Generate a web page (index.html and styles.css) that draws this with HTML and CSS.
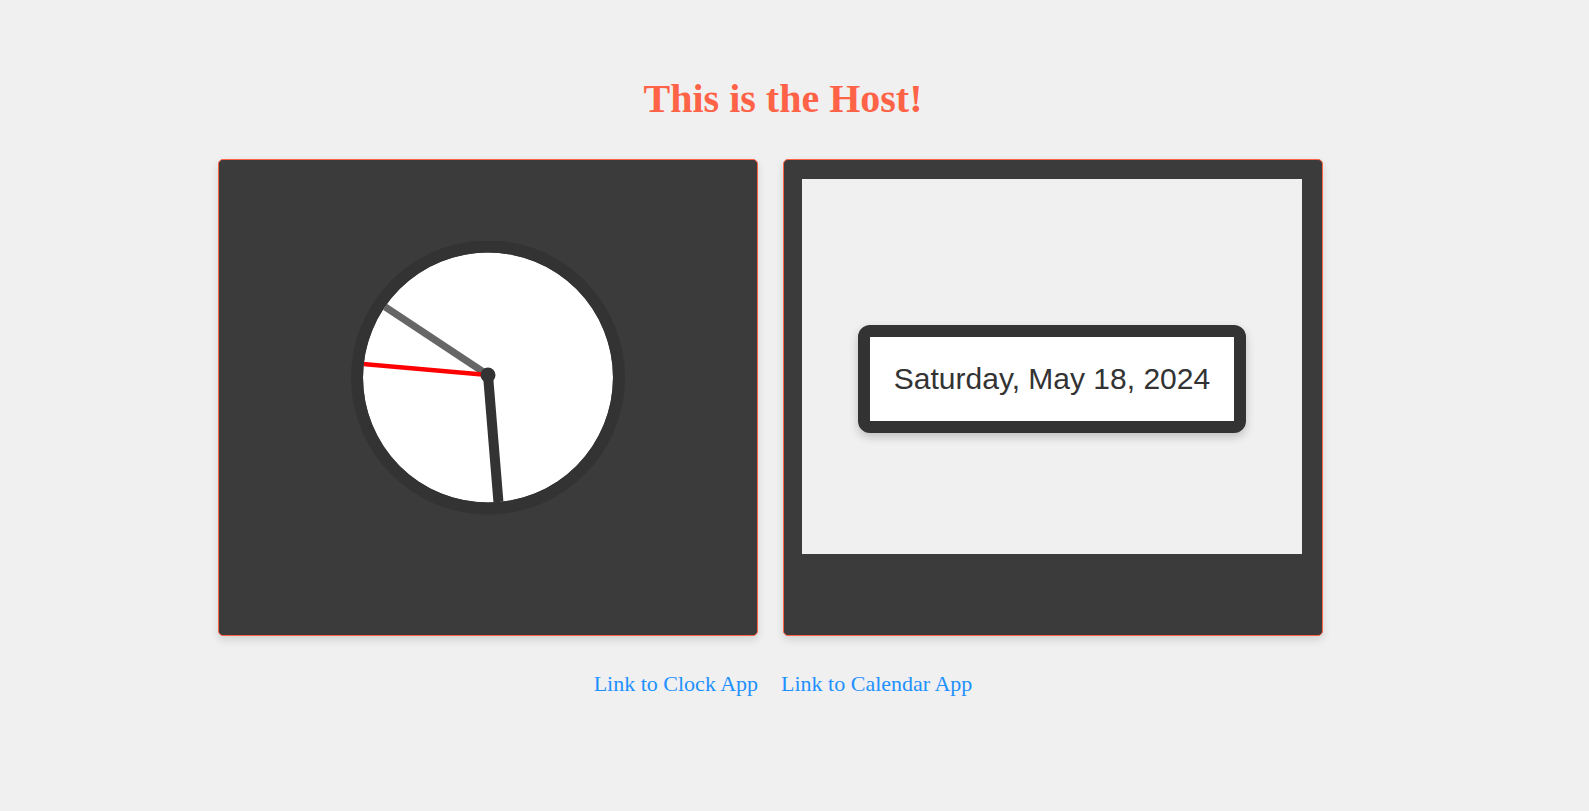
FILE: index.html
```html
<!DOCTYPE html>
<html lang="en">
<head>
<meta charset="utf-8">
<title>Host</title>
<link rel="stylesheet" href="styles.css">
</head>
<body>
<div class="page">
  <h1 class="title">This is the Host!</h1>
  <div class="cards">
    <section class="card card-clock">
      <svg class="clock" width="274" height="274" viewBox="0 0 274 274" aria-label="Clock">
        <defs>
          <clipPath id="face">
            <circle cx="137" cy="136.5" r="125"/>
          </clipPath>
        </defs>
        <circle cx="137" cy="136.5" r="125" fill="#ffffff"/>
        <g clip-path="url(#face)">
          <line x1="137" y1="134" x2="137" y2="-10" stroke="#333333" stroke-width="10" transform="rotate(175.3 137 134)"/>
          <line x1="137" y1="134" x2="137" y2="-10" stroke="#666666" stroke-width="7" transform="rotate(303.5 137 134)"/>
          <line x1="137" y1="134" x2="137" y2="-10" stroke="#ff0000" stroke-width="4.5" transform="rotate(275 137 134)"/>
        </g>
        <circle cx="137" cy="136.5" r="131" fill="none" stroke="#333333" stroke-width="12"/>
        <circle cx="137" cy="134" r="7.5" fill="#333333"/>
      </svg>
    </section>
    <section class="card card-calendar">
      <div class="frame">
        <div class="date-box">
          <div class="date-text">Saturday, May 18, 2024</div>
        </div>
      </div>
    </section>
  </div>
  <nav class="links">
    <a class="link" href="#clock">Link to Clock App</a>
    <a class="link" href="#calendar">Link to Calendar App</a>
  </nav>
</div>
</body>
</html>
```
FILE: styles.css
```css
html, body {
  margin: 0;
  padding: 0;
  background: #f0f0f0;
}

.page {
  width: 1566px;
  padding-top: 76px;
  font-family: "Liberation Serif", "Times New Roman", serif;
}

.title {
  margin: 0 0 37px;
  text-align: center;
  font-family: "Liberation Serif", "Times New Roman", serif;
  font-weight: 700;
  font-size: 40px;
  line-height: 46px;
  color: #ff6347;
}

.cards {
  display: flex;
  justify-content: center;
  gap: 25px;
  padding-right: 25px;
}

.card {
  box-sizing: border-box;
  width: 540px;
  height: 477px;
  border: 1px solid #ff6347;
  border-radius: 5px;
  background: #3b3b3b;
  box-shadow: 0 4px 8px rgba(0, 0, 0, 0.12);
}

.card-clock {
  display: flex;
  justify-content: center;
  align-items: flex-start;
  padding-top: 81px;
}

.clock {
  display: block;
}

.card-calendar {
  padding: 19px 20px 0 18px;
}

.frame {
  width: 500px;
  height: 375px;
  background: #f0f0f0;
  display: flex;
  justify-content: center;
  align-items: flex-start;
  padding-top: 146px;
  box-sizing: border-box;
}

.date-box {
  border: 12px solid #333333;
  border-radius: 12px;
  background: #ffffff;
  box-shadow: 0 4px 10px rgba(0, 0, 0, 0.2);
}

.date-text {
  padding: 24px;
  font-family: "Liberation Sans", Arial, sans-serif;
  font-size: 30px;
  line-height: 36px;
  color: #333333;
  white-space: nowrap;
}

.links {
  display: flex;
  justify-content: center;
  gap: 23px;
  margin-top: 35px;
}

.link {
  font-family: "Liberation Serif", "Times New Roman", serif;
  font-size: 22px;
  color: #1e90ff;
  text-decoration: none;
}
```
